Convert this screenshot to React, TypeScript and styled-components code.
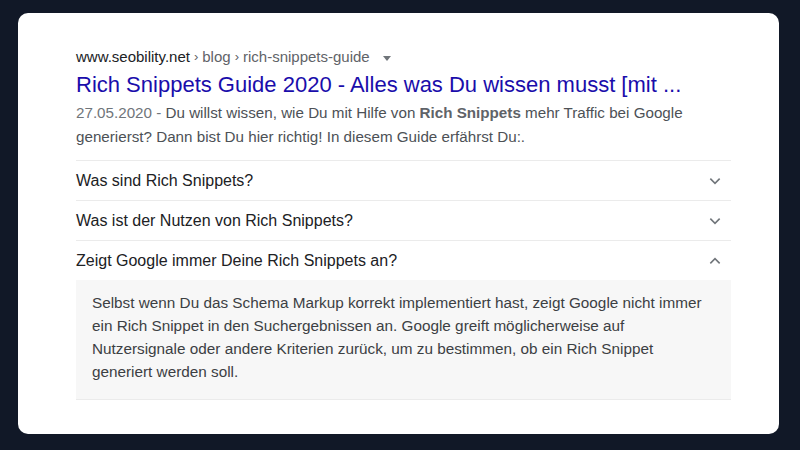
import React, { useState } from 'react';
import styled, { createGlobalStyle } from 'styled-components';

const GlobalStyle = createGlobalStyle`
  html, body {
    margin: 0;
    padding: 0;
    background: #111827;
    font-family: "Liberation Sans", Arial, sans-serif;
  }
`;

const Page = styled.div`
  width: 800px;
  height: 450px;
  box-sizing: border-box;
  padding: 13px 21px 16px 18px;
  display: flex;
`;

const Card = styled.div`
  flex: 1;
  background: #ffffff;
  border-radius: 10px;
  padding: 34px 48px 0 58px;
`;

const Crumbs = styled.div`
  display: flex;
  align-items: center;
  font-size: 15px;
  line-height: 20px;
  color: #5f6368;
`;

const Domain = styled.span`
  color: #202124;
`;

const Sep = styled.span`
  margin: 0 4px;
  font-size: 13px;
`;

const Caret = styled.span`
  display: inline-block;
  margin-left: 13px;
  margin-top: 2px;
  border-left: 4px solid transparent;
  border-right: 4px solid transparent;
  border-top: 5px solid #70757a;
`;

const Title = styled.a`
  display: block;
  font-size: 22px;
  line-height: 28px;
  margin-top: 4px;
  color: #1a0dab;
  text-decoration: none;
  white-space: nowrap;
`;

const Snippet = styled.p`
  margin: 2px 0 11px;
  font-size: 15.2px;
  line-height: 24px;
  color: #4d5156;

  b {
    color: #5f6368;
    font-weight: 700;
  }
`;

const DateText = styled.span`
  color: #70757a;
`;

const Item = styled.div`
  border-top: 1px solid #ebebeb;
`;

const Question = styled.button`
  display: flex;
  width: 100%;
  height: 39px;
  align-items: center;
  justify-content: space-between;
  padding: 0 8px 0 0;
  border: none;
  background: none;
  font-family: inherit;
  font-size: 16px;
  color: #202124;
  cursor: pointer;
  text-align: left;
`;

const Chevron = styled.svg<{ $open: boolean }>`
  width: 16px;
  height: 16px;
  transform: ${({ $open }) => ($open ? 'rotate(180deg)' : 'none')};
`;

const Answer = styled.div`
  background: #f7f7f7;
  padding: 11px 26px 16px 16px;
  font-size: 15.3px;
  line-height: 23px;
  color: #3c4043;
  border-bottom: 1px solid #ebebeb;
`;

const faqs = [
  { q: 'Was sind Rich Snippets?', a: '' },
  { q: 'Was ist der Nutzen von Rich Snippets?', a: '' },
  {
    q: 'Zeigt Google immer Deine Rich Snippets an?',
    a: 'Selbst wenn Du das Schema Markup korrekt implementiert hast, zeigt Google nicht immer ein Rich Snippet in den Suchergebnissen an. Google greift möglicherweise auf Nutzersignale oder andere Kriterien zurück, um zu bestimmen, ob ein Rich Snippet generiert werden soll.',
  },
];

const App: React.FC = () => {
  const [open, setOpen] = useState(2);

  return (
    <>
      <GlobalStyle />
      <Page>
        <Card>
          <Crumbs>
            <Domain>www.seobility.net</Domain>
            <Sep>›</Sep>blog<Sep>›</Sep>rich-snippets-guide
            <Caret />
          </Crumbs>
          <Title href="#">Rich Snippets Guide 2020 - Alles was Du wissen musst [mit ...</Title>
          <Snippet>
            <DateText>27.05.2020 - </DateText>Du willst wissen, wie Du mit Hilfe von <b>Rich Snippets</b> mehr
            Traffic bei Google generierst? Dann bist Du hier richtig! In diesem Guide erfährst Du:.
          </Snippet>
          {faqs.map((f, i) => (
            <Item key={f.q}>
              <Question onClick={() => setOpen(open === i ? -1 : i)}>
                {f.q}
                <Chevron $open={open === i} viewBox="0 0 24 24" fill="none" stroke="#70757a" strokeWidth="2.4">
                  <path d="M5 8.5l7 7 7-7" />
                </Chevron>
              </Question>
              {open === i && f.a && <Answer>{f.a}</Answer>}
            </Item>
          ))}
        </Card>
      </Page>
    </>
  );
};

export default App;
